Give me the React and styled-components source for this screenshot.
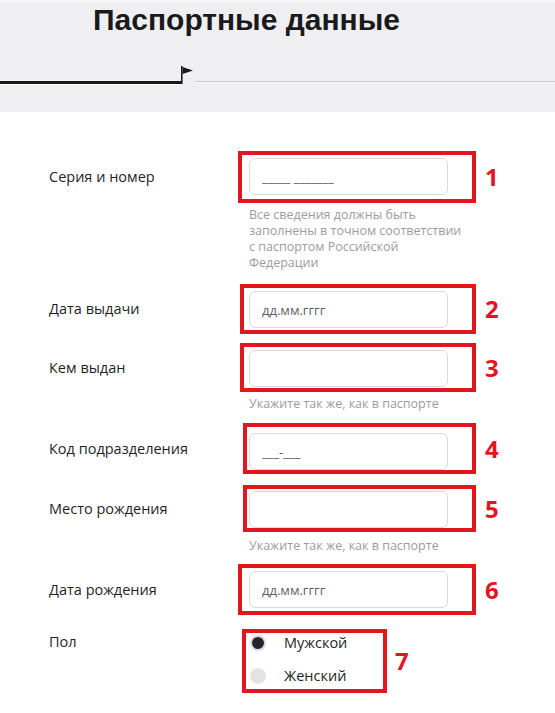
import styled, { createGlobalStyle } from "styled-components";

const GlobalStyle = createGlobalStyle`
  html, body {
    margin: 0;
    padding: 0;
    background: #ffffff;
  }
  * {
    box-sizing: border-box;
  }
`;

const Page = styled.div`
  width: 555px;
  min-height: 713px;
  background: #ffffff;
  font-family: "Open Sans", "Noto Sans", sans-serif;
  color: #1f1f1f;
  overflow: hidden;
`;

const Header = styled.header`
  height: 112px;
  background: #efeff1;
  border-top: 3px solid #f7f7f8;
`;

const Title = styled.h1`
  margin: 0;
  padding-left: 93px;
  font-family: "Liberation Sans", Arial, sans-serif;
  font-weight: 700;
  font-size: 30px;
  line-height: 34px;
  color: #1a1a1c;
`;

const Progress = styled.div`
  display: flex;
  align-items: flex-end;
  height: 18px;
  margin-top: 29px;
`;

const Done = styled.div`
  width: 181px;
  height: 3px;
  background: #1b1b1d;
  box-shadow: 0 1px 0 #ffffff;
`;

const Track = styled.div`
  flex: 1;
  height: 1px;
  margin-bottom: 2px;
  background: #c9c9cc;
  box-shadow: 0 1px 0 #f8f8f9;
`;

const Form = styled.div`
  display: flex;
  flex-direction: column;
`;

const Row = styled.div`
  display: grid;
  grid-template-columns: 238px auto;
  align-items: center;
  margin-top: ${(p) => p.$mt}px;
`;

const Label = styled.div`
  padding-left: 49px;
  font-size: 14.5px;
  line-height: 20px;
  color: #1f1f1f;
  align-self: ${(p) => (p.$top ? "start" : "center")};
  margin-top: ${(p) => p.$top || 0}px;
`;

const Control = styled.div`
  display: flex;
  align-items: center;
`;

const Mark = styled.div`
  border: 4px solid #e3161f;
  margin-left: ${(p) => p.$ml || 0}px;
  padding: ${(p) => p.$pt}px 24px ${(p) => p.$pb}px ${(p) => p.$pl}px;
`;

const Input = styled.input`
  display: block;
  width: 199px;
  height: 37px;
  margin: 0;
  padding: 0 12px;
  border: 1px solid #d9d9dd;
  border-radius: 6px;
  background: #ffffff;
  font-family: "Open Sans", "Noto Sans", sans-serif;
  font-size: 13px;
  color: #333;
  outline: none;
  &::placeholder {
    color: #5f5f63;
    opacity: 1;
  }
`;

const Number = styled.div`
  margin-left: ${(p) => p.$gap || 9}px;
  font-family: "Open Sans", "Noto Sans", sans-serif;
  font-weight: 700;
  font-size: 24px;
  line-height: 24px;
  color: #e3161f;
`;

const Hint = styled.div`
  grid-column: 2;
  margin-top: ${(p) => p.$mt}px;
  padding-left: 11px;
  font-size: 12.5px;
  line-height: 16px;
  color: #9c9ca0;
`;

const RadioMark = styled.div`
  width: 145px;
  margin-left: 4px;
  border: 4px solid #e3161f;
  padding: 0 4px 3px 4px;
  display: flex;
  flex-direction: column;
  gap: 13px;
`;

const Option = styled.label`
  display: flex;
  align-items: center;
  gap: 18px;
  height: 20px;
  font-size: 14.5px;
  line-height: 18px;
  color: #1f1f1f;
`;

const Dot = styled.span`
  width: 16px;
  height: 16px;
  border-radius: 50%;
  flex: none;
  background: ${(p) => (p.$on ? "#24252f" : "#e3e3e6")};
  border: ${(p) => (p.$on ? "2px solid #dcdce0" : "none")};
`;

const Flag = () => (
  <svg width="14" height="18" viewBox="0 0 14 18">
    <rect x="0" y="0" width="1.6" height="18" fill="#1b1b1d" />
    <path d="M1.6 1 L12 4.6 L1.6 8 Z" fill="#1b1b1d" />
  </svg>
);

const fields = [
  { label: "Серия и номер", mask: "_____ _______", n: 1, mt: 39, box: { ml: 0, pl: 7, pt: 3, pb: 4 } },
  { label: "Дата выдачи", mask: "дд.мм.гггг", n: 2, mt: 13, box: { ml: 2, pl: 5, pt: 3, pb: 2 } },
  { label: "Кем выдан", mask: "", n: 3, mt: 9, box: { ml: 2, pl: 5, pt: 3, pb: 1 }, hint: true },
  { label: "Код подразделения", mask: "___-___", n: 4, mt: 11, box: { ml: 5, pl: 2, pt: 6, pb: 0 } },
  { label: "Место рождения", mask: "", n: 5, mt: 11, box: { ml: 5, pl: 2, pt: 2, pb: 0 }, hint: true },
  { label: "Дата рождения", mask: "дд.мм.гггг", n: 6, mt: 10, box: { ml: 0, pl: 7, pt: 3, pb: 3 } },
];

const App = () => {
  return (
    <Page>
      <GlobalStyle />
      <Header>
        <Title>Паспортные данные</Title>
        <Progress>
          <Done />
          <Flag />
          <Track />
        </Progress>
      </Header>
      <Form>
        {fields.map((f) => (
          <Row key={f.n} $mt={f.mt}>
            <Label>{f.label}</Label>
            <Control>
              <Mark $ml={f.box.ml} $pl={f.box.pl} $pt={f.box.pt} $pb={f.box.pb}>
                <Input placeholder={f.mask} />
              </Mark>
              <Number>{f.n}</Number>
            </Control>
            {f.n === 1 && (
              <Hint $mt={4}>
                Все сведения должны быть
                <br />
                заполнены в точном соответствии
                <br />
                с паспортом Российской
                <br />
                Федерации
              </Hint>
            )}
            {f.hint && <Hint $mt={f.n === 5 ? 6 : 4}>Укажите так же, как в паспорте</Hint>}
          </Row>
        ))}
        <Row $mt={14}>
          <Label $top={3}>Пол</Label>
          <Control>
            <RadioMark>
              <Option>
                <Dot $on />
                Мужской
              </Option>
              <Option>
                <Dot />
                Женский
              </Option>
            </RadioMark>
            <Number $gap={8}>7</Number>
          </Control>
        </Row>
      </Form>
    </Page>
  );
};

export default App;
